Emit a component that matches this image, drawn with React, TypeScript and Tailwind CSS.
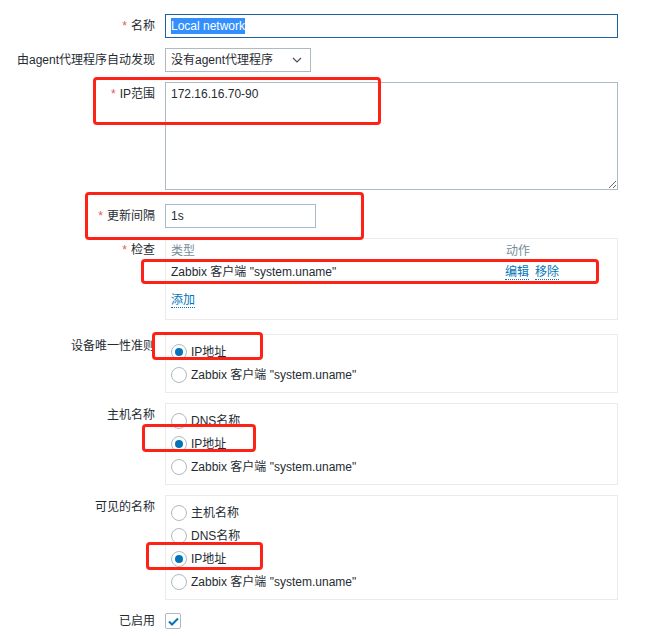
import React from 'react'

const Req = () => <span className="text-[#e45959] mr-[4px]">*</span>

const Row = ({
  label,
  required,
  className = '',
  children,
}: {
  label: string
  required?: boolean
  className?: string
  children: React.ReactNode
}) => (
  <div className={`grid grid-cols-[155px_453px] gap-x-[10px] ${className}`}>
    <div className="text-right leading-[24px] whitespace-nowrap">
      {required && <Req />}
      {label}
    </div>
    <div>{children}</div>
  </div>
)

const Radio = ({ checked, label }: { checked?: boolean; label: string }) => (
  <div className="flex items-center h-[23px]">
    <span className="w-[16px] h-[16px] rounded-full border border-[#acbbc2] bg-white flex items-center justify-center mr-[4px]">
      {checked && <span className="w-[8px] h-[8px] rounded-full bg-[#0275b8]" />}
    </span>
    <span>{label}</span>
  </div>
)

const RadioBox = ({ options, selected }: { options: string[]; selected: string }) => (
  <div className="border border-[#ebebeb] pl-[5px] pt-[5px] pb-[6px]">
    {options.map((o) => (
      <Radio key={o} label={o} checked={o === selected} />
    ))}
  </div>
)

const Link = ({ children }: { children: React.ReactNode }) => (
  <span className="text-[#0275b8] border-b border-dotted border-[#0275b8] leading-[14px]">{children}</span>
)

const Mark = ({ className }: { className: string }) => (
  <div className={`absolute border-[3px] border-[#fe2116] rounded-[4px] ${className}`} />
)

const App = () => {
  const zabbix = 'Zabbix 客户端 "system.uname"'

  return (
    <div className="relative w-[648px] h-[638px] bg-white text-[12px] text-[#1f2c33] font-['Liberation_Sans','Noto_Sans_CJK_SC',sans-serif] overflow-hidden">
      <div className="pt-[14px]">
        {/* 名称 */}
        <Row label="名称" required>
          <div className="h-[24px] border border-[#1a62a0] px-[5px] flex items-center">
            <span className="bg-[#338ffd] text-white leading-[16px]">Local network</span>
          </div>
        </Row>

        {/* agent 代理 */}
        <Row label="由agent代理程序自动发现" className="mt-[10px]">
          <div className="w-[146px] h-[24px] border border-[#acbbc2] pl-[5px] pr-[8px] flex items-center justify-between">
            <span>没有agent代理程序</span>
            <svg width="10" height="6" viewBox="0 0 10 6" fill="none">
              <polyline points="1,1 5,5 9,1" stroke="#4a4f52" strokeWidth="1.2" />
            </svg>
          </div>
        </Row>

        {/* IP范围 */}
        <Row label="IP范围" required className="mt-[10px]">
          <textarea
            readOnly
            defaultValue="172.16.16.70-90"
            className="block w-full h-[108px] border border-[#acbbc2] px-[5px] pt-[3px] leading-[16px] text-[#1f2c33] outline-none resize"
          />
        </Row>

        {/* 更新间隔 */}
        <Row label="更新间隔" required className="mt-[14px]">
          <div className="w-[151px] h-[24px] border border-[#acbbc2] px-[5px] flex items-center">1s</div>
        </Row>

        {/* 检查 */}
        <Row label="检查" required className="mt-[10px]">
          <div className="h-[82px] border border-[#ebebeb] px-[5px] pt-[2px]">
            <div className="grid grid-cols-[335px_1fr] h-[20px] items-center text-[#768d99]">
              <span>类型</span>
              <span>动作</span>
            </div>
            <div className="grid grid-cols-[334px_1fr] h-[22px] items-center">
              <span>{zabbix}</span>
              <span className="flex gap-[6px]">
                <Link>编辑</Link>
                <Link>移除</Link>
              </span>
            </div>
            <div className="mt-[6px] h-[22px] flex items-center">
              <Link>添加</Link>
            </div>
          </div>
        </Row>

        <Row label="设备唯一性准则" className="mt-[14px]">
          <RadioBox options={['IP地址', zabbix]} selected="IP地址" />
        </Row>

        <Row label="主机名称" className="mt-[10px]">
          <RadioBox options={['DNS名称', 'IP地址', zabbix]} selected="IP地址" />
        </Row>

        <Row label="可见的名称" className="mt-[10px]">
          <RadioBox options={['主机名称', 'DNS名称', 'IP地址', zabbix]} selected="IP地址" />
        </Row>

        <Row label="已启用" className="mt-[9px]">
          <div className="h-[24px] flex items-center">
            <span className="w-[16px] h-[16px] border border-[#acbbc2] rounded-[2px] flex items-center justify-center">
              <svg width="11" height="9" viewBox="0 0 11 9" fill="none">
                <polyline points="1,4.5 4,7.5 10,1.5" stroke="#0275b8" strokeWidth="2" />
              </svg>
            </span>
          </div>
        </Row>
      </div>

      {/* annotation boxes */}
      <Mark className="left-[93px] top-[77px] w-[288px] h-[48px]" />
      <Mark className="left-[85px] top-[192px] w-[279px] h-[48px]" />
      <Mark className="left-[141px] top-[259px] w-[458px] h-[25px]" />
      <Mark className="left-[152px] top-[332px] w-[111px] h-[28px]" />
      <Mark className="left-[142px] top-[424px] w-[114px] h-[28px]" />
      <Mark className="left-[146px] top-[542px] w-[117px] h-[28px]" />
    </div>
  )
}

export default App
